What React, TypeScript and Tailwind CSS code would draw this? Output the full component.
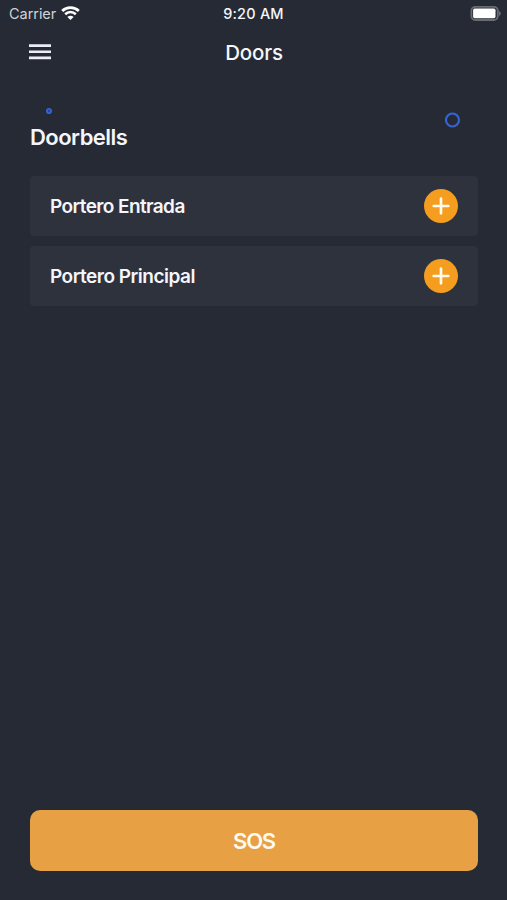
const doorbells = [
    { id: 1, name: 'Portero Entrada', textClass: 'tracking-[-0.6px]' },
    { id: 2, name: 'Portero Principal', textClass: 'tracking-[-0.5px]' },
];

export default function App() {
    return (
        <div className="flex flex-col h-screen min-h-[900px] bg-[#252a35] text-[#f4f6fb] font-['Inter',sans-serif]">
            <StatusBar />
            <Header />

            <main className="flex flex-1 flex-col pl-[30px] pr-[29px] pb-[29px]">
                <div className="flex h-[44px] items-end justify-between pl-[15px] pr-[17px]">
                    <svg className="mb-[8px] h-2 w-2" viewBox="0 0 8 8" fill="none">
                        <circle cx="4" cy="4" r="2.1" fill="#27438f" stroke="#3462d8" strokeWidth="1.9" />
                    </svg>
                    <svg className="-mb-[5px] h-4 w-4" viewBox="0 0 16 16" fill="none">
                        <circle cx="7.5" cy="8" r="6.5" stroke="#3763d9" strokeWidth="2.1" />
                    </svg>
                </div>

                <h2 className="h-[28px] text-[22px] leading-[28px] font-semibold tracking-[-0.53px]">
                    Doorbells
                </h2>

                <ul className="mt-[25px] flex flex-col gap-[10px]">
                    {doorbells.map((door) => (
                        <li
                            key={door.id}
                            className="flex h-[60px] items-center justify-between rounded-[4px] bg-[#2d323d] pl-[20px] pr-[20px]"
                        >
                            <span className={`pt-[3px] text-[19px] font-semibold ${door.textClass}`}>{door.name}</span>
                            <AddButton />
                        </li>
                    ))}
                </ul>

                <button className="mt-auto h-[61px] w-full rounded-[10px] bg-[#e7a044] pt-[2px] text-[22px] font-semibold tracking-[-1.2px] text-[#fffaf0]">
                    SOS
                </button>
            </main>
        </div>
    );
}

function StatusBar() {
    return (
        <div className="grid h-[27px] grid-cols-3 items-center text-[14.5px]">
            <div className="flex items-center gap-[5px] pl-[9px] text-[#cfd2d9]">
                <span className="tracking-[-0.05px]">Carrier</span>
                <svg className="mb-[1px] h-[14px] w-[19px]" viewBox="0 0 19 14" fill="none" stroke="#fff">
                    <path d="M1.2 5C5.8 0.5 13.2 0.5 17.8 5" strokeWidth="2.8" />
                    <path d="M4.2 8.2C7.2 5.3 11.8 5.3 14.8 8.2" strokeWidth="2.6" />
                    <path d="M9.5 14L6.4 10.9C8.1 9.4 10.9 9.4 12.6 10.9Z" fill="#fff" stroke="none" />
                </svg>
            </div>
            <span className="text-center font-medium tracking-[0.2px]">9:20 AM</span>
            <div className="flex justify-end pr-[5px]">
                <svg className="h-[15px] w-[32px]" viewBox="0 0 32 15" fill="none">
                    <rect x="1.4" y="0.8" width="26.4" height="13.2" rx="4" stroke="#686b74" strokeWidth="1.8" />
                    <rect x="3.1" y="2.6" width="22.4" height="9.6" rx="1.6" fill="#fff" />
                    <path d="M29 5C31.4 5.8 31.4 9 29 9.8Z" fill="#686b74" />
                </svg>
            </div>
        </div>
    );
}

function Header() {
    return (
        <header className="grid h-[52px] grid-cols-3 items-center pl-[29px] pr-[28px]">
            <button className="mb-[3px] flex w-[22px] flex-col" aria-label="Menu">
                <svg className="h-[16px] w-[22px]" viewBox="0 0 22 16" fill="#eceef7">
                    <path d="M0 0.2H22V2.9H0ZM0 6.4H22V9.1H0ZM0 12.5H22V15.2H0Z" />
                </svg>
            </button>
            <h1 className="text-center text-[20.5px] font-medium tracking-[-0.2px]">Doors</h1>
        </header>
    );
}

function AddButton() {
    return (
        <button className="flex h-[34px] w-[34px] items-center justify-center rounded-full bg-[#f49d1f]" aria-label="Add">
            <svg className="h-[18px] w-[18px]" viewBox="0 0 18 18" stroke="#fffaf0" strokeWidth="2.7" strokeLinecap="round">
                <path d="M9 1.7V16.3M1.7 9H16.3" />
            </svg>
        </button>
    );
}
